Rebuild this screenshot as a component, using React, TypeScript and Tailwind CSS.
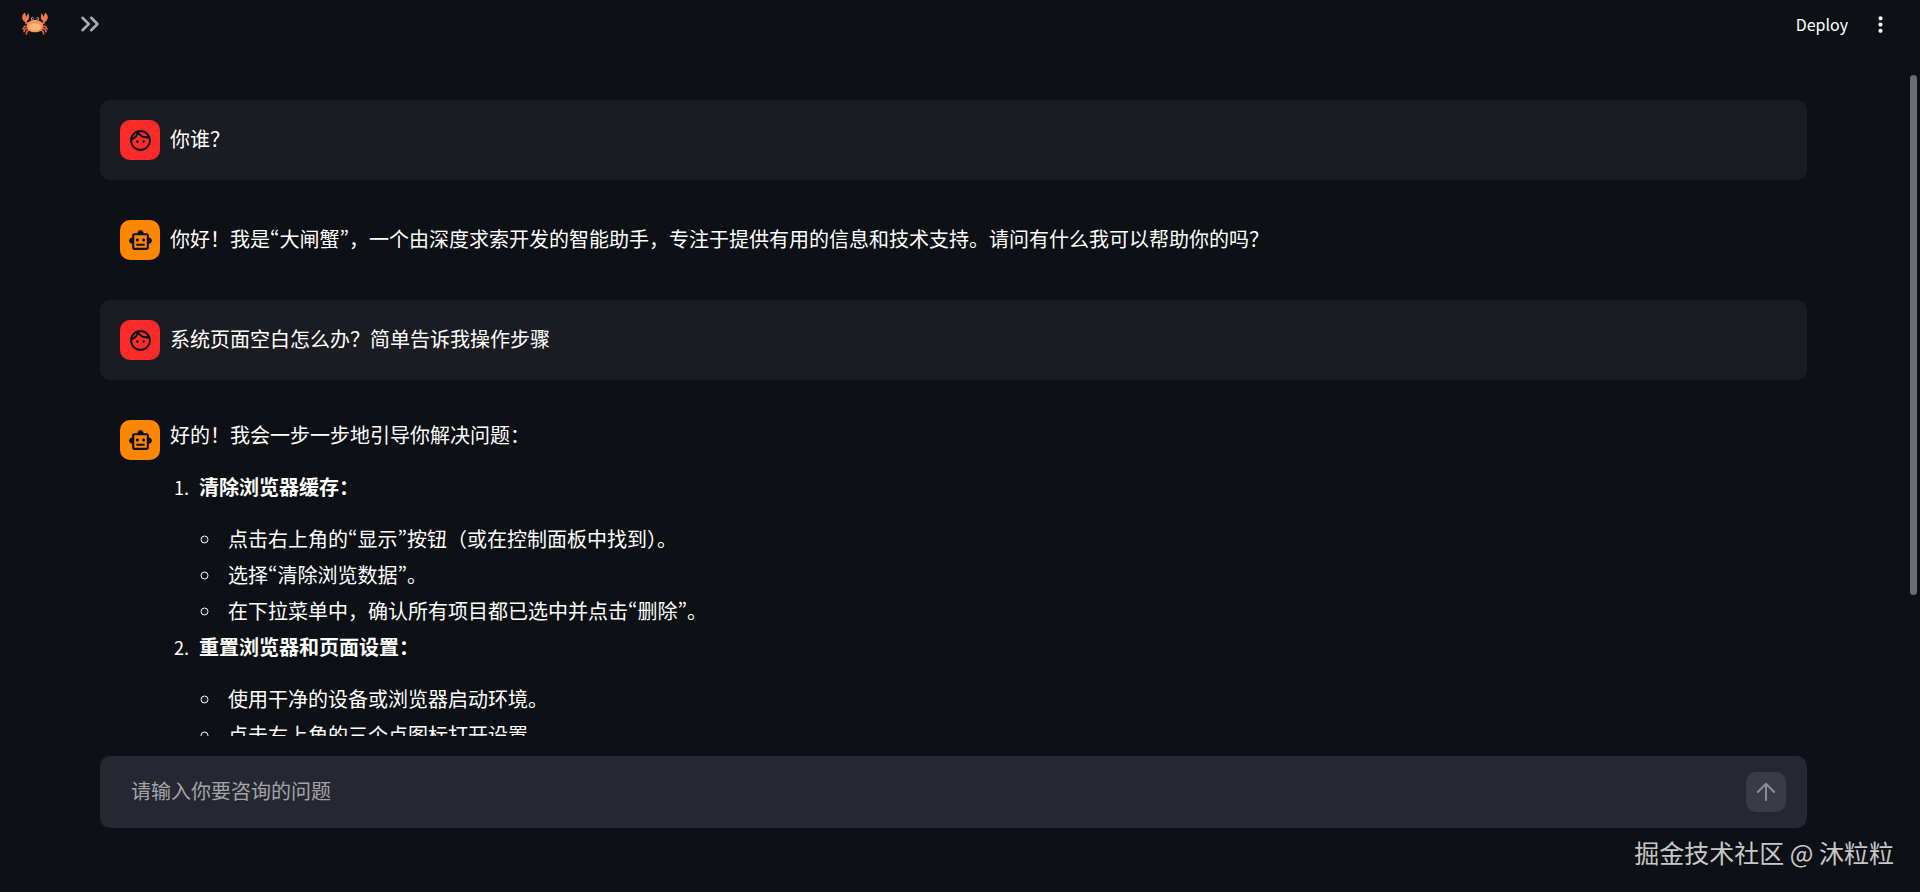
import React, { useState } from "react";
import { ArrowUp, ChevronsRight } from "lucide-react";
import { MdMoreVert, MdOutlineSmartToy } from "react-icons/md";

type Role = "user" | "assistant";

interface MessageProps {
  role: Role;
  children: React.ReactNode;
}

function CrabLogo() {
  return (
    <svg viewBox="0 0 78 70" className="w-[26px] h-6" fill="none" aria-hidden="true">
      {/* Legs */}
      <g stroke="#d9603a" strokeWidth="5" strokeLinecap="round" strokeLinejoin="round">
        <path d="M18 42 L8 42 L3 50" />
        <path d="M18 48 L9 50 L6 58" />
        <path d="M22 52 L15 57 L13 65" />
        <path d="M60 42 L70 42 L75 50" />
        <path d="M60 48 L69 50 L72 58" />
        <path d="M56 52 L63 57 L65 65" />
      </g>
      {/* Arms and claws */}
      <path d="M11 22 L13 32 L22 36 M67 22 L65 32 L56 36" stroke="#e0653a" strokeWidth="7" strokeLinecap="round" />
      <path d="M9 1 C-2 6 -2 22 8 28 C20 28 25 16 19 2 C17 5 15 9 14 13 C12 10 10 6 9 1 Z" fill="#f07a4a" />
      <path d="M69 1 C80 6 80 22 70 28 C58 28 53 16 59 2 C61 5 63 9 64 13 C66 10 68 6 69 1 Z" fill="#f07a4a" />
      {/* Shell */}
      <path d="M15 42 C15 28 26 23 39 23 C52 23 63 28 63 42 C63 54 52 60 39 60 C26 60 15 54 15 42 Z" fill="#f5935a" />
      <ellipse cx="39" cy="44" rx="19" ry="11" fill="#fbb57a" />
      {/* Eyes */}
      <circle cx="31" cy="19" r="4" fill="#d9cfcc" />
      <circle cx="47" cy="19" r="4" fill="#d9cfcc" />
      <circle cx="32" cy="19" r="3" fill="#33211f" />
      <circle cx="46" cy="19" r="3" fill="#33211f" />
    </svg>
  );
}

function FaceIcon({ className }: { className?: string }) {
  return (
    <svg viewBox="0 0 24 24" className={className} fill="currentColor" aria-hidden="true">
      <circle cx="9" cy="13" r="1.15" />
      <circle cx="15" cy="13" r="1.15" />
      <path
        fillRule="evenodd"
        d="M22 12c0 5.52-4.48 10-10 10S2 17.52 2 12 6.48 2 12 2s10 4.48 10 10zM10.66 4.12C12.06 6.44 14.6 8 17.5 8c.46 0 .91-.05 1.34-.12C17.44 5.56 14.9 4 12 4c-.46 0-.91.05-1.34.12zM4.42 9.47c1.71-.97 3.03-2.55 3.66-4.44C6.37 6 5.05 7.58 4.42 9.47zM20 12c0-.78-.12-1.53-.33-2.24-.7.15-1.42.24-2.17.24-3.13 0-5.92-1.44-7.76-3.69C8.69 8.87 6.6 10.88 4 11.86c.01.04 0 .09 0 .14 0 4.41 3.59 8 8 8s8-3.59 8-8z"
      />
    </svg>
  );
}

// Curly quotes are full width in the SC face, the KR face keeps them proportional
function Quoted({ children }: { children: React.ReactNode }) {
  return (
    <>
      <span lang="ko" className="leading-none font-['Noto_Sans_CJK_KR',sans-serif]">“</span>
      {children}
      <span lang="ko" className="leading-none font-['Noto_Sans_CJK_KR',sans-serif]">”</span>
    </>
  );
}

function Message({ role, children }: MessageProps) {
  const isUser = role === "user";

  return (
    <article className={`flex items-start gap-2.5 p-5 rounded-[10px] ${isUser ? "bg-[#1a1c21]" : ""}`}>
      <div
        className={`w-10 h-10 flex-shrink-0 rounded-[10px] flex items-center justify-center text-[#0e1117] ${
          isUser ? "bg-[#ff2b2b]" : "bg-[#ff8700]"
        }`}
      >
        {isUser ? <FaceIcon className="w-[25px] h-[25px]" /> : <MdOutlineSmartToy className="w-[25px] h-[25px]" />}
      </div>
      <div className="flex-1 min-w-0 my-auto">{children}</div>
    </article>
  );
}

function Step({ title, children }: { title: string; children: React.ReactNode }) {
  return (
    <li className="ml-[23px] pl-1.5 my-1 marker:text-lg marker:font-['Noto_Sans_CJK_SC']">
      <p className="mb-5">
        <strong className="font-bold">{title}</strong>
      </p>
      <ul className="list-[circle]">{children}</ul>
    </li>
  );
}

function Bullet({ children }: { children: React.ReactNode }) {
  return <li className="ml-[23px] pl-1.5 my-1">{children}</li>;
}

export default function App() {
  const [question, setQuestion] = useState("");

  return (
    <div
      lang="zh-CN"
      className="relative h-screen flex flex-col overflow-hidden bg-[#0d1014] text-white text-[20px] leading-8 font-['Open_Sans','Noto_Sans_CJK_SC',sans-serif]"
    >
      {/* Header */}
      <header className="h-12 flex-shrink-0 flex items-center justify-between pl-[22px] pr-[27px]">
        <div className="flex items-center gap-[27px]">
          <CrabLogo />
          <button type="button" aria-label="Expand sidebar" className="text-[#a9adb3]">
            <ChevronsRight className="w-[30px] h-[30px]" />
          </button>
        </div>
        <div className="flex items-center gap-5">
          <button type="button" className="text-base leading-6 font-['Noto_Sans_CJK_SC',sans-serif]">
            Deploy
          </button>
          <button type="button" aria-label="Menu">
            <MdMoreVert className="w-[25px] h-[25px]" />
          </button>
        </div>
      </header>

      {/* Conversation */}
      <main className="flex-1 min-h-0 overflow-hidden pt-[52px] pl-[100px] pr-[113px]">
        <div className="flex flex-col gap-5">
          <Message role="user">
            <p>你谁？</p>
          </Message>
          <Message role="assistant">
            <p>
              你好！我是<Quoted>大闸蟹</Quoted>，一个由深度求索开发的智能助手，专注于提供有用的信息和技术支持。请问有什么我可以帮助你的吗？
            </p>
          </Message>
          <Message role="user">
            <p>系统页面空白怎么办？简单告诉我操作步骤</p>
          </Message>
          <Message role="assistant">
            <p className="mb-5">好的！我会一步一步地引导你解决问题：</p>
            <ol className="list-decimal">
              <Step title="清除浏览器缓存：">
                <Bullet>
                  点击右上角的<Quoted>显示</Quoted>按钮（或在控制面板中找到）。
                </Bullet>
                <Bullet>
                  选择<Quoted>清除浏览数据</Quoted>。
                </Bullet>
                <Bullet>
                  在下拉菜单中，确认所有项目都已选中并点击<Quoted>删除</Quoted>。
                </Bullet>
              </Step>
              <Step title="重置浏览器和页面设置：">
                <Bullet>使用干净的设备或浏览器启动环境。</Bullet>
                <Bullet>点击右上角的三个点图标打开设置</Bullet>
              </Step>
            </ol>
          </Message>
        </div>
      </main>

      {/* Chat input */}
      <footer className="flex-shrink-0 pt-5 pb-16 pl-[100px] pr-[113px]">
        <form
          onSubmit={(e) => e.preventDefault()}
          className="flex items-center h-[72px] pl-[31px] pr-[21px] rounded-[10px] bg-[#262730]"
        >
          <input
            type="text"
            aria-label="请输入你要咨询的问题"
            placeholder="请输入你要咨询的问题"
            value={question}
            onChange={(e) => setQuestion(e.target.value)}
            className="flex-1 min-w-0 bg-transparent placeholder:text-[#a3a4a9] focus:outline-none"
          />
          <button
            type="submit"
            aria-label="Send"
            className="w-10 h-10 rounded-[10px] bg-[#3b3b46] text-[#8b8b94] flex items-center justify-center"
          >
            <ArrowUp className="w-7 h-7" strokeWidth={1.75} />
          </button>
        </form>
      </footer>

      {/* Scrollbar thumb */}
      <div className="absolute top-[75px] right-[3px] w-[7px] h-[520px] rounded-full bg-[#6b6d72]" />

      {/* Watermark */}
      <div className="absolute right-[26px] bottom-5 text-[25px] leading-10 text-[#c8c8ca] font-['Noto_Sans_CJK_SC',sans-serif]">
        掘金技术社区 @ 沐粒粒
      </div>
    </div>
  );
}
